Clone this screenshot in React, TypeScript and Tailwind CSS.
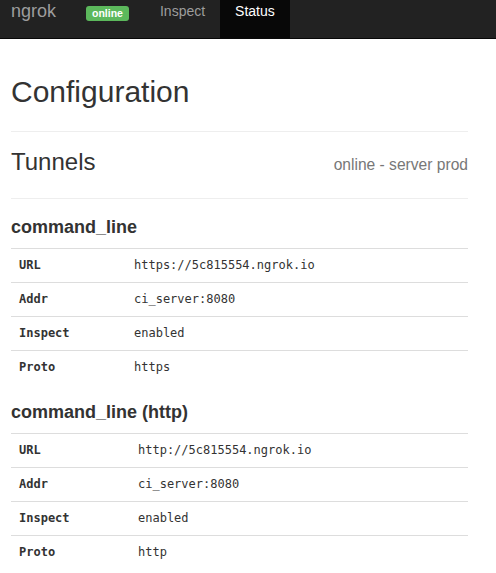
import React from 'react';

type Tunnel = {
  name: string;
  labelWidth: string;
  rows: [string, string][];
};

const TUNNELS: Tunnel[] = [
  {
    name: 'command_line',
    labelWidth: 'w-[123px]',
    rows: [
      ['URL', 'https://5c815554.ngrok.io'],
      ['Addr', 'ci_server:8080'],
      ['Inspect', 'enabled'],
      ['Proto', 'https'],
    ],
  },
  {
    name: 'command_line (http)',
    labelWidth: 'w-[127px]',
    rows: [
      ['URL', 'http://5c815554.ngrok.io'],
      ['Addr', 'ci_server:8080'],
      ['Inspect', 'enabled'],
      ['Proto', 'http'],
    ],
  },
];

const Navbar: React.FC = () => (
  <nav className="h-[39px] bg-[#222] border-b border-[#080808] flex items-stretch font-['Liberation_Sans',Arial,sans-serif]">
    <div className="pl-[11px] pt-[1px] text-[18px] leading-[20px] text-[#9d9d9d]">ngrok</div>
    <div className="ml-[30px] mt-[6px] self-start h-[15px] px-[6px] rounded-[3px] bg-[#5cb85c] text-white text-[10.5px] font-bold leading-[15px]">
      online
    </div>
    <div className="ml-[16px] px-[15px] pt-[1px] text-[14px] leading-[20px] text-[#9d9d9d]">Inspect</div>
    <div className="px-[15px] pt-[1px] text-[14px] leading-[20px] text-white bg-[#080808]">Status</div>
  </nav>
);

const TunnelTable: React.FC<{ tunnel: Tunnel }> = ({ tunnel }) => (
  <div>
    <h3 className="mt-[18px] text-[18px] leading-[20px] font-bold text-[#333]">{tunnel.name}</h3>
    <div className="mt-[11px] font-['DejaVu_Sans_Mono',monospace] text-[12px] text-[#333]">
      {tunnel.rows.map(([label, value]) => (
        <div key={label} className="flex items-center h-[34px] pb-[1px] border-t border-[#ddd]">
          <div className={`${tunnel.labelWidth} pl-[8px] font-bold`}>{label}</div>
          <div>{value}</div>
        </div>
      ))}
    </div>
  </div>
);

const App: React.FC = () => {
  return (
    <div className="min-h-screen bg-white font-['Liberation_Sans',Arial,sans-serif]">
      <Navbar />
      <main className="pl-[11px] w-[468px]">
        <h1 className="mt-[36px] text-[30px] leading-[33px] text-[#333]">Configuration</h1>
        <hr className="mt-[23px] border-t border-[#eee]" />
        <div className="mt-[17px] h-[26px] flex justify-between items-baseline">
          <h2 className="text-[24px] leading-[26px] text-[#333]">Tunnels</h2>
          <span className="text-[15.6px] leading-[20px] text-[#777]">online - server prod</span>
        </div>
        <hr className="mt-[23px] border-t border-[#eee]" />
        {TUNNELS.map((t) => (
          <TunnelTable key={t.name} tunnel={t} />
        ))}
      </main>
    </div>
  );
};

export default App;
